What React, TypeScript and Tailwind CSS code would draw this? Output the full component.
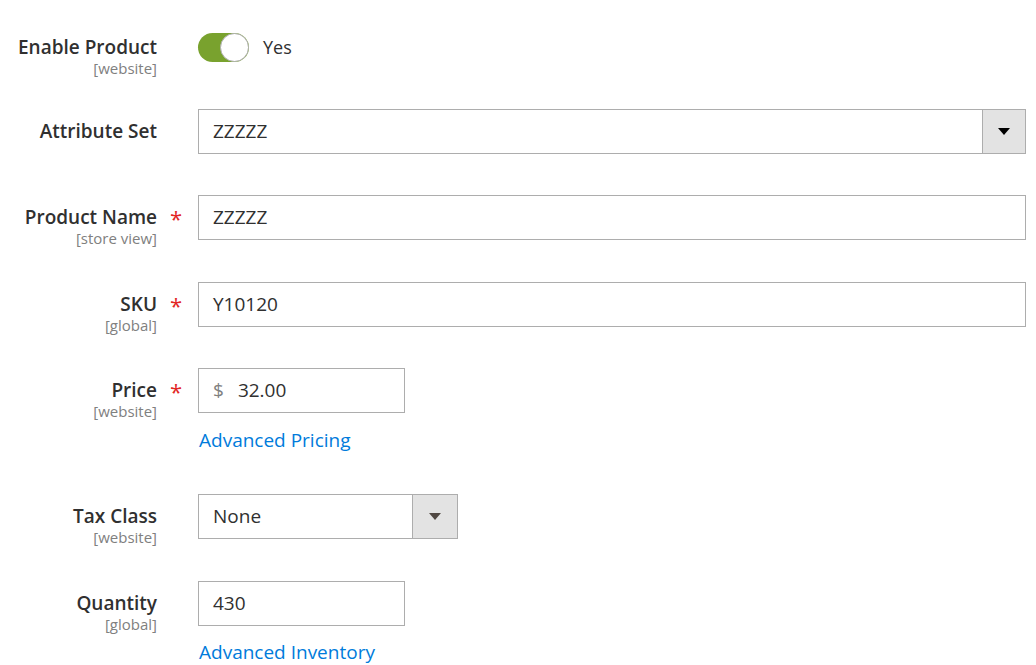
import React from "react";

const font = { fontFamily: '"Open Sans", "Noto Sans", sans-serif' };

const Label = ({ text, scope, required }: { text: string; scope?: string; required?: boolean }) => (
  <div className="flex shrink-0 h-[45px]">
    <div className="w-[157px] text-right pt-[9px]">
      <div className="text-[19px] leading-[26px] font-semibold text-[#303030]">{text}</div>
      {scope && <div className="text-[15px] leading-[18px] text-[#808080] mt-[-1px]">{scope}</div>}
    </div>
    <div className="w-[41px] pt-[11px] pl-[13px]">
      {required && <span className="text-[22px] leading-[24px] text-[#e22626]">*</span>}
    </div>
  </div>
);

const Caret = ({ color }: { color: string }) => (
  <svg width="12" height="7" viewBox="0 0 12 7">
    <path d="M0 0h12L6 7z" fill={color} />
  </svg>
);

const TextBox = ({ value, width }: { value: string; width: string }) => (
  <div className={`${width} h-[45px] border border-[#adadad] bg-white flex items-center px-[14px] text-[19px] text-[#303030]`}>
    {value}
  </div>
);

export default function App() {
  return (
    <div className="bg-white w-[1036px] h-[665px] overflow-hidden pt-[25px]" style={font}>
      {/* Enable Product */}
      <div className="flex items-start mb-[39px]">
        <Label text="Enable Product" scope="[website]" />
        <div className="h-[45px] flex items-center">
          <div className="w-[51px] h-[29px] rounded-full bg-[#79a22e] flex justify-end">
            <div className="w-[29px] h-[29px] rounded-full bg-white border border-[#adadad]" />
          </div>
          <span className="ml-[14px] text-[18px] text-[#303030]">Yes</span>
        </div>
      </div>

      {/* Attribute Set */}
      <div className="flex items-start mb-[41px]">
        <Label text="Attribute Set" />
        <div className="flex-1 h-[45px] flex border border-[#adadad] mr-[10px]">
          <div className="flex-1 flex items-center px-[14px] text-[19px] text-[#303030]">ZZZZZ</div>
          <div className="w-[43px] bg-[#e3e3e3] border-l border-[#adadad] flex items-center justify-center">
            <Caret color="#000" />
          </div>
        </div>
      </div>

      {/* Product Name */}
      <div className="flex items-start mb-[42px]">
        <Label text="Product Name" scope="[store view]" required />
        <div className="flex-1 mr-[10px]">
          <TextBox value="ZZZZZ" width="w-full" />
        </div>
      </div>

      {/* SKU */}
      <div className="flex items-start mb-[41px]">
        <Label text="SKU" scope="[global]" required />
        <div className="flex-1 mr-[10px]">
          <TextBox value="Y10120" width="w-full" />
        </div>
      </div>

      {/* Price */}
      <div className="flex items-start mb-[41px]">
        <Label text="Price" scope="[website]" required />
        <div>
          <div className="w-[207px] h-[45px] border border-[#adadad] flex items-center px-[14px] text-[19px] text-[#303030]">
            <span className="text-[#808080] mr-[14px]">$</span>
            32.00
          </div>
          <a className="block mt-[14px] text-[19px] leading-[26px] text-[#007bdb] pl-[1px]">Advanced Pricing</a>
        </div>
      </div>

      {/* Tax Class */}
      <div className="flex items-start mb-[42px]">
        <Label text="Tax Class" scope="[website]" />
        <div className="w-[260px] h-[45px] flex border border-[#adadad]">
          <div className="flex-1 flex items-center px-[14px] text-[19px] text-[#303030]">None</div>
          <div className="w-[45px] bg-[#e3e3e3] border-l border-[#adadad] flex items-center justify-center">
            <Caret color="#514943" />
          </div>
        </div>
      </div>

      {/* Quantity */}
      <div className="flex items-start">
        <Label text="Quantity" scope="[global]" />
        <div>
          <TextBox value="430" width="w-[207px]" />
          <a className="block mt-[13px] text-[19px] leading-[26px] text-[#007bdb] pl-[1px]">Advanced Inventory</a>
        </div>
      </div>
    </div>
  );
}
